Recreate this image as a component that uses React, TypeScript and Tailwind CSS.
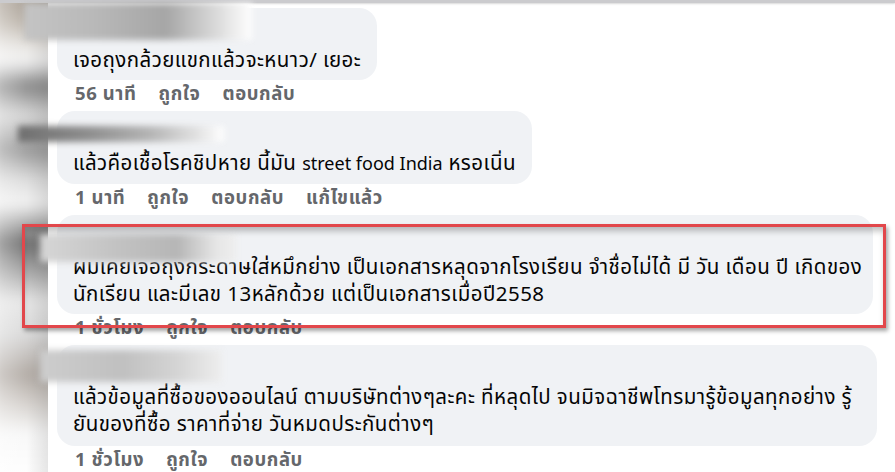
import React from "react";

type Comment = {
  lines: React.ReactNode[];
  meta: string[];
  bubbleW?: string;
  bubblePb: string;
  nameBlur: string;
  nameTint: string;
  gapTop: string;
};

const latin = (t: string) => <span className="text-[18px] tracking-normal">{t}</span>;

const comments: Comment[] = [
  {
    lines: ["เจอถุงกล้วยแขกแล้วจะหนาว/ เยอะ"],
    meta: ["56 นาที", "ถูกใจ", "ตอบกลับ"],
    bubblePb: "pb-[6px]",
    nameBlur: "left-[-33px] top-[-5px] w-[228px] h-[37px]",
    nameTint: "bg-[linear-gradient(90deg,#c4c4c4_0%,#b9b9b9_30%,#a6a6a6_62%,#dedede_86%,#ffffff_100%)]",
    gapTop: "mt-[5px]",
  },
  {
    lines: [<>แล้วคือเชื้อโรคชิปหาย นี้มัน {latin("street food India")} หรอเนิ่น</>],
    meta: ["1 นาที", "ถูกใจ", "ตอบกลับ", "แก้ไขแล้ว"],
    bubblePb: "pb-[6px]",
    nameBlur: "left-[-39px] top-[15px] w-[206px] h-[16px]",
    nameTint: "bg-[linear-gradient(90deg,#6e6e6e_0%,#8f8f8f_35%,#b6b6b6_65%,#e4e4e4_88%,#ffffff_100%)]",
    gapTop: "mt-[7px]",
  },
  {
    lines: [
      "ผมเคยเจอถุงกระดาษใส่หมึกย่าง เป็นเอกสารหลุดจากโรงเรียน จำชื่อไม่ได้ มี วัน เดือน ปี เกิดของ",
      "นักเรียน และมีเลข 13หลักด้วย แต่เป็นเอกสารเมื่อปี2558",
    ],
    meta: ["1 ชั่วโมง", "ถูกใจ", "ตอบกลับ"],
    bubbleW: "w-[816px]",
    bubblePb: "pb-[6px]",
    nameBlur: "left-[-17px] top-[19px] w-[196px] h-[28px]",
    nameTint: "bg-[linear-gradient(90deg,#d6d6d6_0%,#c2c2c2_40%,#b6b6b6_70%,#e6e6e6_90%,#eeeeee_100%)]",
    gapTop: "mt-[7px]",
  },
  {
    lines: [
      "แล้วข้อมูลที่ซื้อของออนไลน์ ตามบริษัทต่างๆละคะ ที่หลุดไป จนมิจฉาชีพโทรมารู้ข้อมูลทุกอย่าง รู้",
      "ยันของที่ซื้อ ราคาที่จ่าย วันหมดประกันต่างๆ",
    ],
    meta: ["1 ชั่วโมง", "ถูกใจ", "ตอบกลับ"],
    bubbleW: "w-[820px]",
    bubblePb: "pb-[8px]",
    nameBlur: "left-[-17px] top-[5px] w-[182px] h-[32px]",
    nameTint: "bg-[linear-gradient(90deg,#cdcdcd_0%,#c0c0c0_45%,#d4d4d4_75%,#eeeeee_100%)]",
    gapTop: "mt-[7px]",
  },
];

function CommentItem({ c }: { c: Comment }) {
  return (
    <div className={c.gapTop}>
      <div className="relative">
        <div className={`rounded-[18px] bg-[#f0f2f5] pt-[7px] px-4 ${c.bubblePb} ${c.bubbleW ?? "w-fit"}`}>
          <div className="h-[32px]" />
          <div className="text-[20.5px] leading-[27px] tracking-[0.45px] text-[#050505] whitespace-nowrap">
            {c.lines.map((l, i) => (
              <div key={i}>{l}</div>
            ))}
          </div>
        </div>
        <div className={`absolute ${c.nameBlur} ${c.nameTint} blur-[3px]`} />
      </div>
      <div className="flex gap-[22px] pl-[18px] pt-[5px] text-[18.5px] leading-[19px] tracking-[0.6px] font-bold text-[#65676b]">
        {c.meta.map((m) => (
          <span key={m}>{m}</span>
        ))}
      </div>
    </div>
  );
}

export default function App() {
  return (
    <div className="relative w-[895px] h-[472px] overflow-hidden bg-white flex flex-col font-['Noto_Sans_Thai','Noto_Sans',Tahoma,sans-serif]">
      <div className="h-[3px] shrink-0 bg-[#cbcbce] shadow-[0_1px_2px_rgba(0,0,0,0.15)]" />
      <div className="flex flex-1">
        <div className="w-[48px] shrink-0 relative overflow-hidden">
          <div className="absolute inset-[-10px] blur-[6px] bg-[linear-gradient(180deg,#a39a8f_0%,#bdb5ab_6%,#e9e7e4_11%,#f2f2f2_14%,#8a8a8a_19%,#d9d9d9_25%,#9a9a9a_32%,#dcdcdc_38%,#f3f3f3_43%,#6f6f6f_51%,#a9a9a9_57%,#e7e7e7_63%,#dadada_70%,#b3aca6_78%,#d7d3cf_84%,#f8f8f8_90%,#ffffff_100%)]" />
          <div className="absolute inset-0 bg-[linear-gradient(90deg,#ffffff55_0%,#ffffff00_55%,#00000018_100%)]" />
        </div>
        <div className="flex-1 pl-[9px]">
          {comments.map((c, i) => (
            <CommentItem key={i} c={c} />
          ))}
        </div>
      </div>
      <div className="absolute left-[22px] top-[224px] w-[864px] h-[104px] border-[3px] border-[#e2474b] shadow-[2px_3px_4px_rgba(0,0,0,0.35),inset_0_6px_6px_-2px_rgba(0,0,0,0.25)]" />
    </div>
  );
}
